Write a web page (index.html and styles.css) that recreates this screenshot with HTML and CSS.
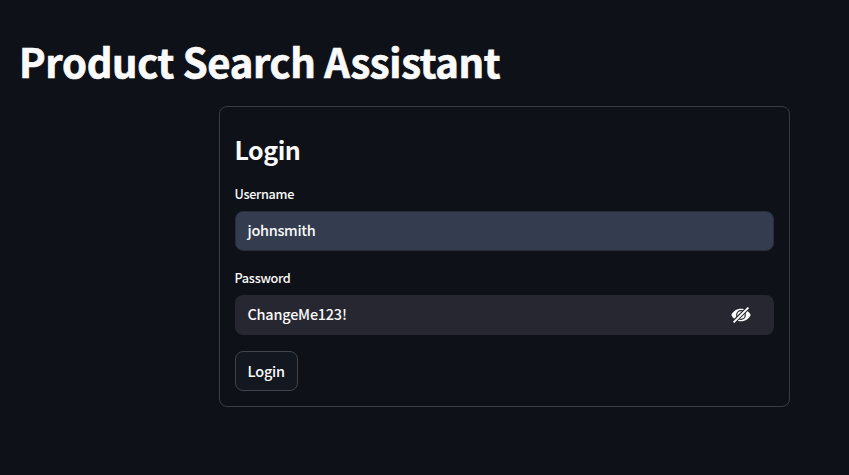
FILE: index.html
```html
<!DOCTYPE html>
<html lang="en">
<head>
<meta charset="utf-8">
<title>Product Search Assistant</title>
<link rel="stylesheet" href="styles.css">
</head>
<body>
<h1>Product Search Assistant</h1>
<form class="card">
  <h2>Login</h2>
  <div class="label">Username</div>
  <div class="field filled">johnsmith</div>
  <div class="label second">Password</div>
  <div class="field password">ChangeMe123!
    <svg class="eye" viewBox="0 0 20 16"><path d="M10 1.700C5.500 1.700 2 4.300.3 8 2 11.700 5.500 14.300 10 14.300S18 11.700 19.700 8C18 4.300 14.500 1.700 10 1.700Z" fill="#fff"/><circle cx="10" cy="8" r="4.300" fill="none" stroke="#262730" stroke-width="1.200"/><path d="M2.500 15.200 17.500.500" stroke="#262730" stroke-width="4"/><path d="M2.600 15.400 17.400.600" stroke="#fff" stroke-width="1.900"/></svg>
  </div>
  <button type="button">Login</button>
</form>
</body>
</html>
```
FILE: styles.css
```css
* { box-sizing: border-box; }
body { margin: 0; padding: 36px 20px 0 19px; height: 475px; overflow: hidden; background: #0e1117; color: #fafafa; font-family: "Noto Sans CJK SC", sans-serif; }
h1, h2 { margin: 0; white-space: nowrap; }
h1 { font-size: 40px; line-height: 50px; font-weight: 700; letter-spacing: -.34px; -webkit-text-stroke: .7px #fafafa; }
.card { margin: 20px 0 0 200px; width: 571px; height: 301px; padding: 25px 15px 0; border: 1px solid #3a3c43; border-radius: 8px; }
h2 { font-size: 25px; line-height: 34px; font-weight: 700; letter-spacing: -.5px; margin-left: -.5px; }
.label { margin: 18px 0 0 -.5px; height: 20px; line-height: 20px; font-size: 12.700px; font-weight: 500; letter-spacing: -.3px; }
.label.second { margin-top: 17px; }
.field { margin-top: 7px; width: 539px; height: 40px; display: flex; align-items: center; justify-content: space-between; padding: 0 23px 3px 12.500px; border-radius: 8px; background: #262730; font-size: 14.500px; font-weight: 500; letter-spacing: -.3px; }
.filled { padding-left: 11.500px; background: #343c50; border: 1px solid #292d3a; }
.password { letter-spacing: -.25px; }
.eye { width: 20px; height: 16px; position: relative; top: 1.500px; }
button { display: block; margin-top: 16px; width: 63px; height: 40px; padding: 0 0 2px 11.500px; text-align: left; color: #fafafa; background: #131720; border: 1px solid #42444b; border-radius: 8px; font: 500 14.500px "Noto Sans CJK SC", sans-serif; letter-spacing: -.2px; }
```
